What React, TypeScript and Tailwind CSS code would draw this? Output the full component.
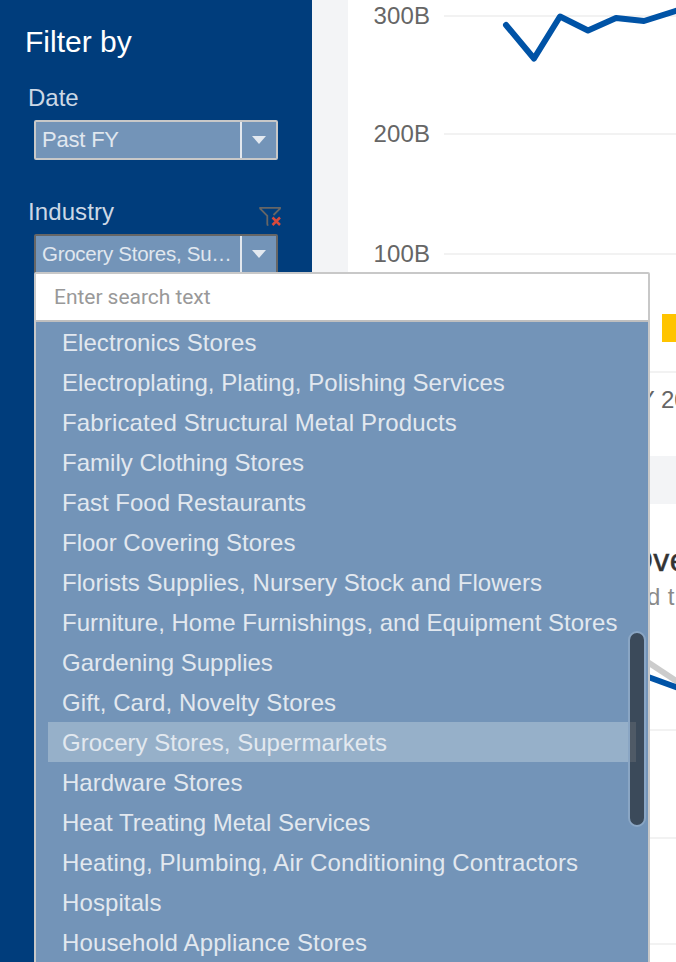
import { ReactNode } from "react";

const items = [
  { name: "Electronics Stores", tracking: "tracking-[0.06px]" },
  { name: "Electroplating, Plating, Polishing Services", tracking: "tracking-[0.03px]" },
  { name: "Fabricated Structural Metal Products", tracking: "tracking-[0.15px]" },
  { name: "Family Clothing Stores", tracking: "tracking-[0.03px]" },
  { name: "Fast Food Restaurants", tracking: "tracking-normal" },
  { name: "Floor Covering Stores", tracking: "tracking-normal" },
  { name: "Florists Supplies, Nursery Stock and Flowers", tracking: "tracking-[0.06px]" },
  { name: "Furniture, Home Furnishings, and Equipment Stores", tracking: "tracking-[0.01px]" },
  { name: "Gardening Supplies", tracking: "tracking-normal" },
  { name: "Gift, Card, Novelty Stores", tracking: "tracking-[0.08px]" },
  { name: "Grocery Stores, Supermarkets", tracking: "tracking-[0.03px]" },
  { name: "Hardware Stores", tracking: "tracking-[0.03px]" },
  { name: "Heat Treating Metal Services", tracking: "tracking-normal" },
  { name: "Heating, Plumbing, Air Conditioning Contractors", tracking: "tracking-[0.17px]" },
  { name: "Hospitals", tracking: "tracking-[0.1px]" },
  { name: "Household Appliance Stores", tracking: "tracking-[0.14px]" },
];

const selected = "Grocery Stores, Supermarkets";

function GridRow({ label, className = "" }: { label: string; className?: string }) {
  return (
    <div className={`flex h-8 shrink-0 items-center ${className}`}>
      <span className="w-[82px] text-right text-2xl leading-8 tracking-[0.1px] text-[#666]">{label}</span>
      <span className="ml-3.5 h-0.5 flex-1 bg-[#f2f2f2]" />
    </div>
  );
}

function Select({ children, open = false }: { children: ReactNode; open?: boolean }) {
  return (
    <div
      className={`ml-[34px] flex h-10 w-[244px] rounded-[2px] border-2 bg-[#7394b8] text-[#e0e7ef] ${
        open ? "border-[#666]" : "border-[#c8c8c8]"
      }`}
    >
      <div className="flex-1 pl-1.5 leading-9 whitespace-nowrap">{children}</div>
      <div className="flex w-9 shrink-0 items-center justify-center border-l-2 border-[#e3e8ee]">
        <svg width="14" height="8" viewBox="0 0 14 8" className="mr-px">
          <path d="M0 0H14L7 8Z" fill="#e3e9f0" />
        </svg>
      </div>
    </div>
  );
}

export default function App() {
  return (
    <div className="relative flex h-[962px] w-[676px] overflow-hidden bg-[#f3f4f6] font-['Liberation_Sans',Arial,sans-serif]">
      <aside className="w-[312px] shrink-0 bg-[#003d7c]">
        <h1 className="mt-[22px] ml-[25px] text-[30px] leading-10 text-white">Filter by</h1>
        <h2 className="mt-5 ml-7 text-2xl leading-8 text-[#ccd8e5]">Date</h2>
        <div className="mt-1.5 text-[22px] tracking-[-0.2px]">
          <Select>Past FY</Select>
        </div>
        <div className="mt-9 flex h-8 items-start justify-between pl-7">
          <h2 className="text-2xl leading-8 tracking-[0.1px] text-[#ccd8e5]">Industry</h2>
          <svg width="24" height="22" viewBox="0 0 24 22" className="mt-2.5 mr-[30px]" fill="none">
            <path d="M9.8 19.8L9.3 18V9.8L2.2 2.6V1.8H22V2.6L15.5 9" stroke="#666" strokeWidth="1.8" />
            <path d="M14.5 11.5L22 19M22 11.5L14.5 19" stroke="#d84a3c" strokeWidth="2.5" />
          </svg>
        </div>
        <div className="mt-1.5 text-[20.5px] tracking-[-0.28px]">
          <Select open>Grocery Stores, Su…</Select>
        </div>
      </aside>

      <main className="relative ml-9 flex flex-1 flex-col overflow-hidden">
        <section className="flex h-[456px] shrink-0 flex-col bg-white">
          <GridRow label="300B" />
          <GridRow label="200B" className="mt-[86px]" />
          <GridRow label="100B" className="mt-[88px]" />
          <div className="mt-[44px] ml-[314px] h-7 w-5 bg-[#ffc400]" />
          <div className="mt-[29px] ml-24 h-0.5 bg-[#f2f2f2]" />
          <div className="mt-[11px] pl-[276px] text-2xl leading-8 whitespace-nowrap text-[#666]">FY 20</div>
        </section>
        <section className="mt-12 flex h-[458px] flex-col bg-white">
          <h2 className="mt-9 pl-[280px] text-[32px] leading-10 tracking-[0.4px] whitespace-nowrap text-[#333] [-webkit-text-stroke:0.5px_#333]">
            Ove
          </h2>
          <p className="mt-px pl-[299px] text-2xl leading-8 tracking-[0.4px] whitespace-nowrap text-[#8a8a8a]">d t</p>
          <div className="mt-[116px] h-0.5 bg-[#f2f2f2]" />
          <div className="mt-[106px] h-0.5 bg-[#f2f2f2]" />
          <div className="mt-[104px] h-0.5 bg-[#f2f2f2]" />
        </section>
        <svg className="absolute inset-0" width="328" height="962" viewBox="348 0 328 962" fill="none">
          <path
            d="M506 25L534 58.5L560 16.5L588 30.5L616 18L644 21L680 9.5"
            stroke="#0053a6"
            strokeWidth="6"
            strokeLinejoin="round"
            strokeLinecap="round"
          />
          <path d="M640 657L684 686" stroke="#ccc" strokeWidth="6" />
          <path d="M640 674L684 690" stroke="#0053a6" strokeWidth="6" />
        </svg>
      </main>

      <div className="absolute top-[272px] left-[34px] h-[700px] w-[616px] rounded-[2px] border-2 border-[#c8c8c8] bg-[#7394b8]">
        <div className="h-12 border-b-2 border-[#bfbfbf] bg-white pl-[18px] font-[Roboto,sans-serif] text-[21px] leading-[46px] tracking-[-0.04px] text-[#999]">
          Enter search text
        </div>
        <ul className="px-3">
          {items.map(({ name, tracking }) => (
            <li
              key={name}
              className={`h-10 pl-3.5 text-2xl leading-[42px] whitespace-nowrap text-[#e2e8ef] ${tracking} ${
                name === selected ? "bg-[#96b0c9]" : ""
              }`}
            >
              {name}
            </li>
          ))}
        </ul>
        <div className="absolute top-[357px] right-0.5 h-[196px] w-[18px] overflow-hidden rounded-full border-2 border-[#8aa6c4] bg-[#3b4a5a]">
          <div className="mt-[89px] h-10 w-1.5 bg-[#4f5a66]" />
        </div>
      </div>
    </div>
  );
}
